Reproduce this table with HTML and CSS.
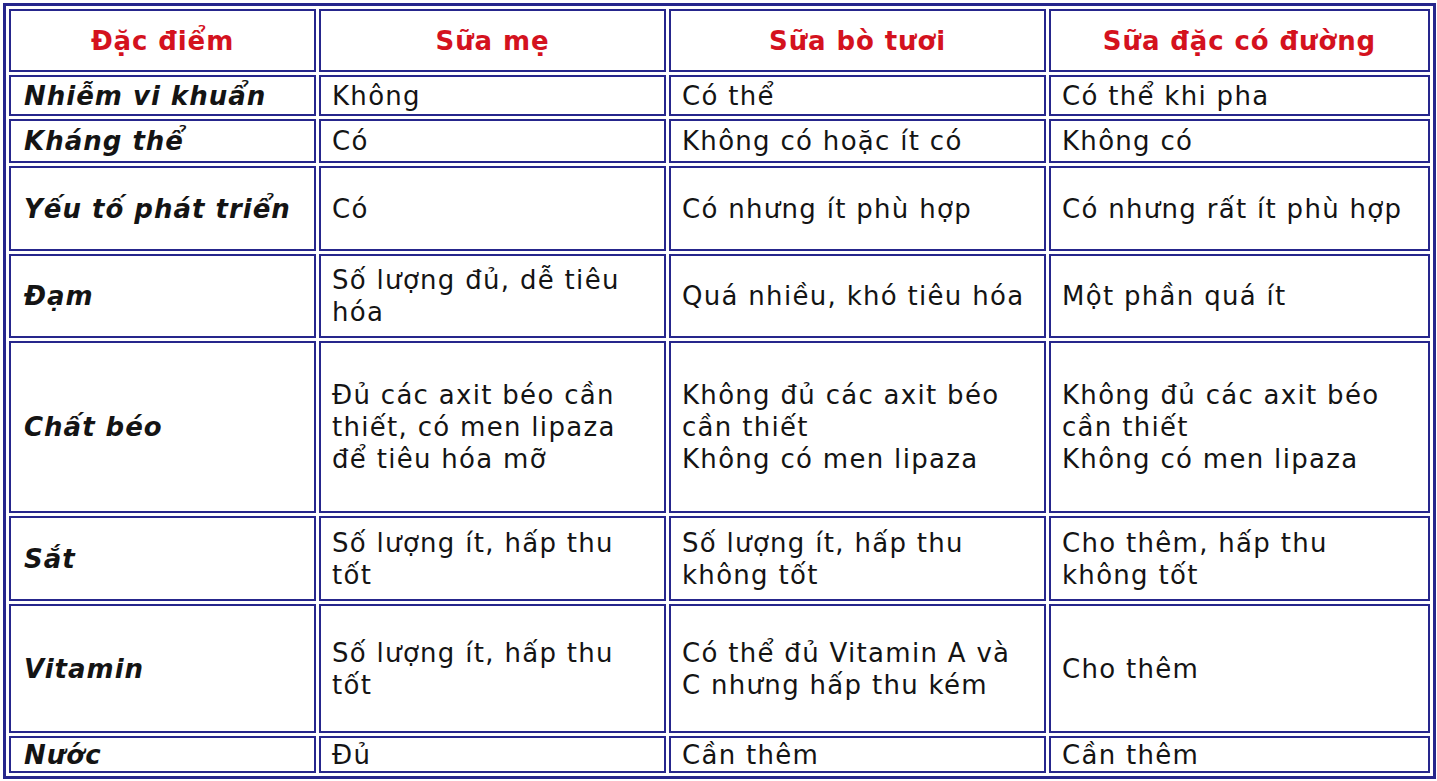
FILE: index.html
```html
<!DOCTYPE html>
<html lang="vi">
<head>
<meta charset="utf-8">
<title>So sánh sữa</title>
<link rel="stylesheet" href="styles.css">
</head>
<body>
<table class="cmp">
  <colgroup>
    <col class="c1"><col class="c2"><col class="c3"><col class="c4">
  </colgroup>
  <tr class="r-head">
    <th>Đặc điểm</th><th>Sữa mẹ</th><th>Sữa bò tươi</th><th>Sữa đặc có đường</th>
  </tr>
  <tr class="r1">
    <td class="lbl">Nhiễm vi khuẩn</td><td>Không</td><td>Có thể</td><td>Có thể khi pha</td>
  </tr>
  <tr class="r2">
    <td class="lbl">Kháng thể</td><td>Có</td><td>Không có hoặc ít có</td><td>Không có</td>
  </tr>
  <tr class="r3">
    <td class="lbl">Yếu tố phát triển</td><td>Có</td><td>Có nhưng ít phù hợp</td><td>Có nhưng rất ít phù hợp</td>
  </tr>
  <tr class="r4">
    <td class="lbl">Đạm</td><td>Số lượng đủ, dễ tiêu hóa</td><td>Quá nhiều, khó tiêu hóa</td><td>Một phần quá ít</td>
  </tr>
  <tr class="r5">
    <td class="lbl">Chất béo</td><td>Đủ các axit béo cần thiết, có men lipaza để tiêu hóa mỡ</td><td>Không đủ các axit béo cần thiết<br>Không có men lipaza</td><td>Không đủ các axit béo cần thiết<br>Không có men lipaza</td>
  </tr>
  <tr class="r6">
    <td class="lbl">Sắt</td><td>Số lượng ít, hấp thu tốt</td><td>Số lượng ít, hấp thu không tốt</td><td>Cho thêm, hấp thu không tốt</td>
  </tr>
  <tr class="r7">
    <td class="lbl">Vitamin</td><td>Số lượng ít, hấp thu tốt</td><td>Có thể đủ Vitamin A và C nhưng hấp thu kém</td><td>Cho thêm</td>
  </tr>
  <tr class="r8">
    <td class="lbl">Nước</td><td>Đủ</td><td>Cần thêm</td><td>Cần thêm</td>
  </tr>
</table>
</body>
</html>
```

FILE: styles.css
```css
html, body {
  margin: 0;
  padding: 0;
  background: #ffffff;
}

body {
  padding: 3px 0 0 3px;
}

.cmp {
  table-layout: fixed;
  width: 1433px;
  border-collapse: separate;
  border-spacing: 3px;
  border: 3px solid #26268c;
  font-family: "DejaVu Sans", Verdana, sans-serif;
  font-size: 26px;
  line-height: 32px;
  letter-spacing: 1.3px;
  color: #141414;
}

.c1 { width: 307px; }
.c2 { width: 347px; }
.c3 { width: 377px; }
.c4 { width: 381px; }

.cmp th,
.cmp td {
  border: 2px solid #26268c;
  vertical-align: middle;
  text-align: left;
  padding: 0 15px 0 11px;
}

.cmp td.lbl {
  font-weight: bold;
  font-style: italic;
  letter-spacing: 1px;
  padding-left: 13px;
}

.cmp th {
  text-align: center;
  font-weight: bold;
  letter-spacing: 0.9px;
  color: #d4121e;
  padding: 0 4px;
}

.r-head { height: 63px; }
.r1 { height: 41px; }
.r2 { height: 44px; }
.r3 { height: 85px; }
.r4 { height: 84px; }
.r5 { height: 172px; }
.r6 { height: 85px; }
.r7 { height: 129px; }
.r8 { height: 37px; }
```
